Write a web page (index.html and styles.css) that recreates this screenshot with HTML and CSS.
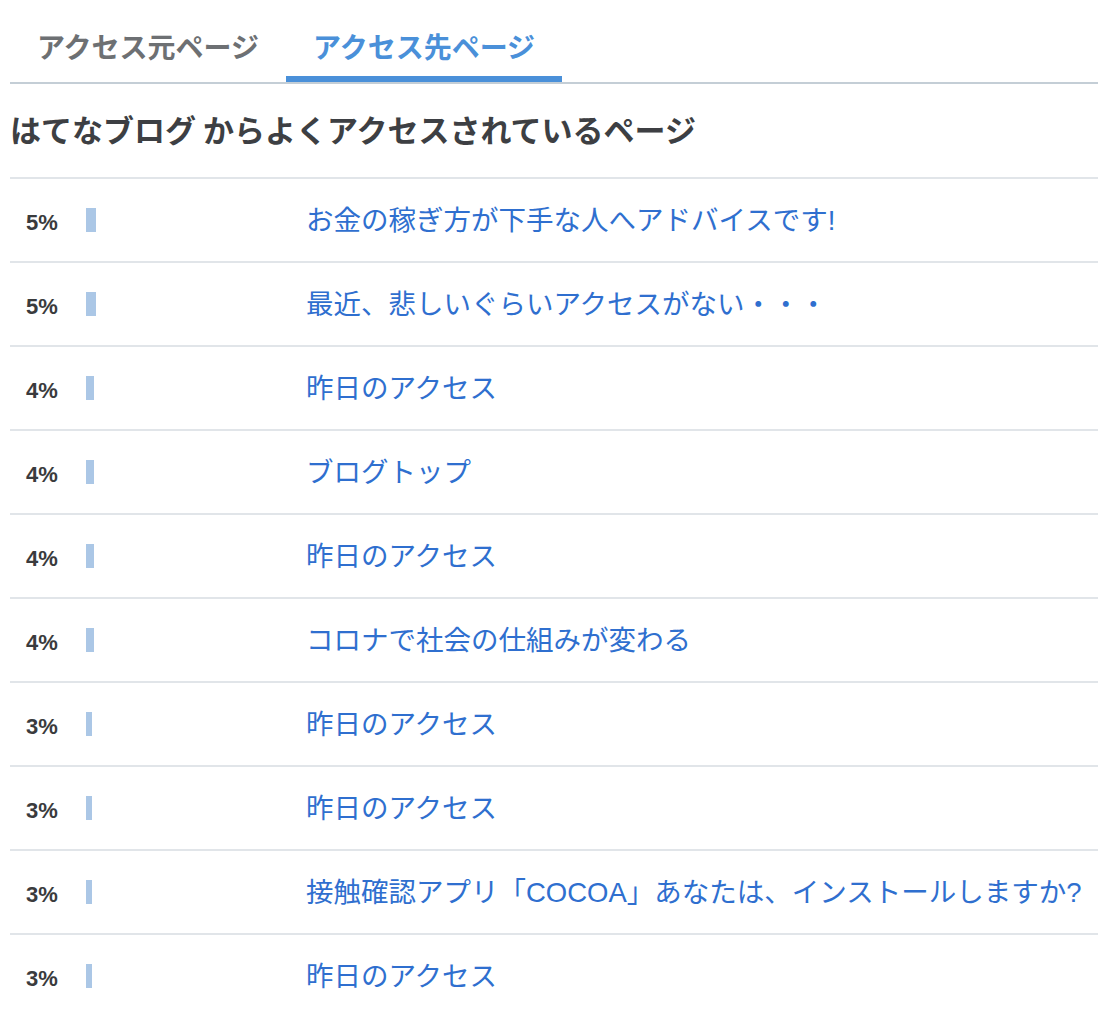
FILE: index.html
```html
<!DOCTYPE html>
<html lang="ja">
<head>
  <meta charset="UTF-8" />
  <title>アクセス解析</title>
  <link rel="stylesheet" href="styles.css">
</head>
<body>
  <div class="panel">
    <div class="tabs">
      <a class="tab">アクセス元ページ</a>
      <a class="tab active">アクセス先ページ</a>
    </div>

    <h2 class="title">はてなブログ からよくアクセスされているページ</h2>

    <ul class="pages">
      <li class="row">
        <span class="pct">5%</span>
        <span class="bar-cell"><span class="bar" style="width:10px"></span></span>
        <a class="page-link">お金の稼ぎ方が下手な人へアドバイスです!</a>
      </li>
      <li class="row">
        <span class="pct">5%</span>
        <span class="bar-cell"><span class="bar" style="width:10px"></span></span>
        <a class="page-link">最近、悲しいぐらいアクセスがない・・・</a>
      </li>
      <li class="row">
        <span class="pct">4%</span>
        <span class="bar-cell"><span class="bar" style="width:8px"></span></span>
        <a class="page-link">昨日のアクセス</a>
      </li>
      <li class="row">
        <span class="pct">4%</span>
        <span class="bar-cell"><span class="bar" style="width:8px"></span></span>
        <a class="page-link">ブログトップ</a>
      </li>
      <li class="row">
        <span class="pct">4%</span>
        <span class="bar-cell"><span class="bar" style="width:8px"></span></span>
        <a class="page-link">昨日のアクセス</a>
      </li>
      <li class="row">
        <span class="pct">4%</span>
        <span class="bar-cell"><span class="bar" style="width:8px"></span></span>
        <a class="page-link">コロナで社会の仕組みが変わる</a>
      </li>
      <li class="row">
        <span class="pct">3%</span>
        <span class="bar-cell"><span class="bar" style="width:6px"></span></span>
        <a class="page-link">昨日のアクセス</a>
      </li>
      <li class="row">
        <span class="pct">3%</span>
        <span class="bar-cell"><span class="bar" style="width:6px"></span></span>
        <a class="page-link">昨日のアクセス</a>
      </li>
      <li class="row">
        <span class="pct">3%</span>
        <span class="bar-cell"><span class="bar" style="width:6px"></span></span>
        <a class="page-link">接触確認アプリ「COCOA」あなたは、インストールしますか?</a>
      </li>
      <li class="row">
        <span class="pct">3%</span>
        <span class="bar-cell"><span class="bar" style="width:6px"></span></span>
        <a class="page-link">昨日のアクセス</a>
      </li>
    </ul>
  </div>
</body>
</html>
```

FILE: styles.css
```css
body {
  margin: 0;
  background: #fff;
  font-family: "Liberation Sans", "Noto Sans CJK JP", sans-serif;
}
.panel {
  margin-left: 10px;
}
.tabs {
  display: flex;
  border-bottom: 2px solid #c4ced6;
  height: 82px;
}
.tab {
  display: block;
  padding: 26px 27px 0;
  font-family: "Noto Sans CJK JP", sans-serif;
  font-size: 28px;
  font-weight: bold;
  line-height: 40px;
  color: #6d7073;
  box-sizing: border-box;
  height: 82px;
}
.tab.active {
  color: #4a90d9;
  border-bottom: 6px solid #4a90d9;
}
.title {
  margin: 0;
  padding: 27px 0 30px;
  font-family: "Noto Sans CJK JP", sans-serif;
  font-size: 31px;
  font-weight: bold;
  line-height: 36px;
  color: #3d3f43;
  border-bottom: 2px solid #e1e5e9;
}
.pages {
  list-style: none;
  margin: 0;
  padding: 0;
}
.row {
  display: flex;
  align-items: center;
  height: 82px;
  border-bottom: 2px solid #e1e5e9;
}
.pct {
  width: 60px;
  padding-left: 16px;
  font-size: 22px;
  font-weight: bold;
  color: #3a3b3d;
  padding-top: 6px;
}
.bar-cell {
  width: 220px;
  display: flex;
  align-items: center;
}
.bar {
  display: block;
  height: 24px;
  background: #abc7e6;
}
.page-link {
  font-size: 27.5px;
  color: #2f6fcf;
  line-height: 36px;
  padding-top: 2px;
}
```
